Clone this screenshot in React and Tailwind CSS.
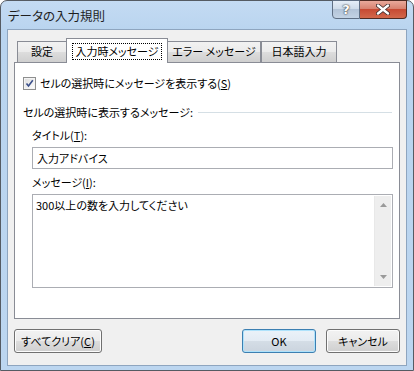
import React from "react";

const font = "font-['Noto_Sans_CJK_JP','Noto_Sans',sans-serif] [font-feature-settings:'palt']";

function Btn({ children, className = "", def }) {
  return (
    <div
      className={
        "flex h-[24px] items-center justify-center rounded-[3px] border " +
        (def
          ? "border-[#3c7fb1] shadow-[inset_0_0_0_1px_#aee2fb] bg-[linear-gradient(#eaf2f9_0%,#e3ebf3_50%,#d4dde6_51%,#cbd4de_100%)] "
          : "border-[#707070] shadow-[inset_0_0_0_1px_#fcfcfc] bg-[linear-gradient(#f2f2f2_0%,#ebebeb_50%,#dddddd_51%,#cfcfcf_100%)] ") +
        className
      }
    >
      {children}
    </div>
  );
}

const inactive =
  "mt-[3px] flex h-[21px] items-center justify-center border-t border-[#898c95] bg-[linear-gradient(#f2f2f2_0%,#ebebeb_50%,#dddddd_51%,#cfcfcf_100%)] pb-[1px]";

export default function App() {
  return (
    <div className={"relative h-[371px] w-[414px] overflow-hidden text-[11px] text-black " + font}>
      <div className="flex h-full w-full flex-col rounded-t-[7px] border border-[#555b63] bg-[linear-gradient(180deg,#c4dbf3_0px,#b9d4ef_30px,#bcd6f0_100%)]">
        {/* title bar */}
        <div className="flex h-[28px] shrink-0 items-start">
          <div className="pl-[7px] pt-[7px] text-[12.5px] leading-[16px] text-[#1e1e1e]">データの入力規則</div>
          <div className="ml-auto mr-[6px] flex -mt-[1px]">
            <div className="flex h-[19px] w-[28px] items-center justify-center rounded-bl-[4px] border border-[#5f6f84] bg-[linear-gradient(#e5eef8_0%,#cfdcea_45%,#b3c4d8_50%,#c3d3e5_100%)] text-[13px] font-bold leading-none text-white [text-shadow:0_0_2px_#333,0_0_1px_#333] font-['DejaVu_Sans',sans-serif]">
              ?
            </div>
            <div className="flex h-[19px] w-[47px] items-center justify-center rounded-br-[4px] border border-l-0 border-[#4f2a22] bg-[linear-gradient(#e9a99b_0%,#d88270_45%,#c74a33_50%,#d2684b_100%)]">
              <svg width="14" height="11" viewBox="0 0 14 11">
                <path d="M2 1.5 L12 9.5 M12 1.5 L2 9.5" stroke="#3a2a2a" strokeWidth="4" strokeLinecap="round" />
                <path d="M2 1.5 L12 9.5 M12 1.5 L2 9.5" stroke="#ffffff" strokeWidth="2.4" strokeLinecap="round" />
              </svg>
            </div>
          </div>
        </div>
        {/* client */}
        <div className="mx-[6px] mb-[4px] flex flex-1 flex-col border border-[#8ea5bf] bg-[#f0f0f0] px-[6px] pt-[8px]">
          <div className="flex pl-[3px]">
            <div className={inactive + " w-[49px] border-l"}>設定</div>
            <div className="relative z-10 -mb-[1px] flex h-[25px] w-[102px] items-start justify-center border border-b-0 border-[#898c95] bg-white pt-[4px]">
              <span className="border border-dotted border-black px-[2px] leading-[15px]">入力時メッセージ</span>
            </div>
            <div className={inactive + " w-[93px] border-r"}>エラー メッセージ</div>
            <div className={inactive + " w-[76px] border-l border-r"}>日本語入力</div>
          </div>
          <div className="relative flex h-[257px] flex-col border border-[#898c95] bg-white pl-[8px] pr-[6px]">
            <div className="mt-[12px] flex items-center">
              <div className="flex h-[13px] w-[13px] items-center justify-center border border-[#8e8f8f] bg-[linear-gradient(135deg,#dcdcdc,#ffffff)] shadow-[inset_0_0_0_1px_#f4f4f4]">
                <svg width="9" height="9" viewBox="0 0 9 9">
                  <path d="M1.5 4.5 L3.5 7 L7.8 1.3" fill="none" stroke="#3a4f8a" strokeWidth="1.6" />
                </svg>
              </div>
              <span className="ml-[4px] leading-[16px]">
                セルの選択時にメッセージを表示する(<span className="underline">S</span>)
              </span>
            </div>
            <div className="mt-[13px] flex items-center">
              <span className="leading-[16px]">セルの選択時に表示するメッセージ:</span>
              <div className="ml-[5px] mr-[1px] h-px flex-1 bg-[#d5dfe5]" />
            </div>
            <div className="ml-[9px]">
              <div className="mt-[7px] leading-[16px]">
                タイトル(<span className="underline">T</span>):
              </div>
              <div className="mt-[4px] flex h-[22px] items-center border border-[#abadb3] bg-white pl-[4px] leading-[16px]">
                入力アドバイス
              </div>
              <div className="mt-[5px] leading-[16px]">
                メッセージ(<span className="underline">I</span>):
              </div>
              <div className="mt-[4px] flex h-[94px] border border-[#abadb3] bg-white">
                <div className="flex-1 pl-[3px] pt-[2px] leading-[16px]">300以上の数を入力してください</div>
                <div className="my-[1px] mr-[1px] flex w-[17px] flex-col items-center justify-between border-l border-[#e8e8e8] bg-[#eeeeee] py-[7px]">
                  <svg width="7" height="4" viewBox="0 0 7 4"><path d="M0 4 L3.5 0 L7 4 Z" fill="#9a9a9a" /></svg>
                  <svg width="7" height="4" viewBox="0 0 7 4"><path d="M0 0 L3.5 4 L7 0 Z" fill="#9a9a9a" /></svg>
                </div>
              </div>
            </div>
          </div>
          <div className="mt-[10px] flex items-center">
            <Btn className="w-[88px]">
              すべてクリア(<span className="underline">C</span>)
            </Btn>
            <Btn def className="ml-auto w-[74px]">OK</Btn>
            <Btn className="ml-[10px] w-[74px]">キャンセル</Btn>
          </div>
        </div>
      </div>
    </div>
  );
}
